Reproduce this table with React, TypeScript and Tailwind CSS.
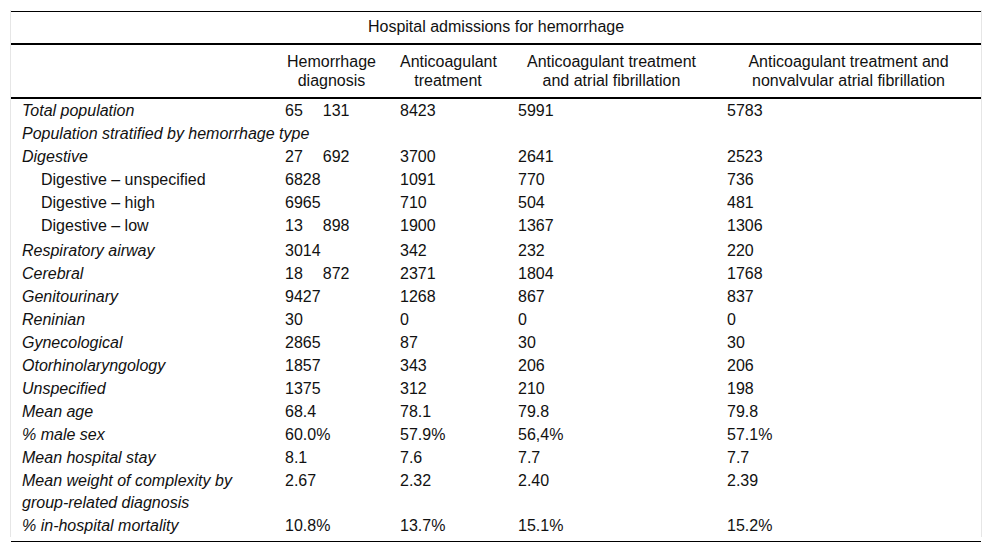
const columns = [
  { key: "c1", label: ["Hemorrhage", "diagnosis"] },
  { key: "c2", label: ["Anticoagulant", "treatment"] },
  { key: "c3", label: ["Anticoagulant treatment", "and atrial fibrillation"] },
  { key: "c4", label: ["Anticoagulant treatment and", "nonvalvular atrial fibrillation"] },
];

type Row = {
  label: string[];
  values?: string[];
  sub?: boolean;
  gapAfter?: boolean;
};

const rows: Row[] = [
  { label: ["Total population"], values: ["65 131", "8423", "5991", "5783"] },
  { label: ["Population stratified by hemorrhage type"] },
  { label: ["Digestive"], values: ["27 692", "3700", "2641", "2523"] },
  { label: ["Digestive – unspecified"], values: ["6828", "1091", "770", "736"], sub: true },
  { label: ["Digestive – high"], values: ["6965", "710", "504", "481"], sub: true },
  { label: ["Digestive – low"], values: ["13 898", "1900", "1367", "1306"], sub: true, gapAfter: true },
  { label: ["Respiratory airway"], values: ["3014", "342", "232", "220"] },
  { label: ["Cerebral"], values: ["18 872", "2371", "1804", "1768"] },
  { label: ["Genitourinary"], values: ["9427", "1268", "867", "837"] },
  { label: ["Reninian"], values: ["30", "0", "0", "0"] },
  { label: ["Gynecological"], values: ["2865", "87", "30", "30"] },
  { label: ["Otorhinolaryngology"], values: ["1857", "343", "206", "206"] },
  { label: ["Unspecified"], values: ["1375", "312", "210", "198"] },
  { label: ["Mean age"], values: ["68.4", "78.1", "79.8", "79.8"] },
  { label: ["% male sex"], values: ["60.0%", "57.9%", "56,4%", "57.1%"] },
  { label: ["Mean hospital stay"], values: ["8.1", "7.6", "7.7", "7.7"] },
  {
    label: ["Mean weight of complexity by", "group-related diagnosis"],
    values: ["2.67", "2.32", "2.40", "2.39"],
  },
  { label: ["% in-hospital mortality"], values: ["10.8%", "13.7%", "15.1%", "15.2%"] },
];

// numbers like "65 131" are printed with a wide thousands gap
function Num({ v }: { v: string }) {
  const parts = v.split(" ");
  if (parts.length === 1) return <>{v}</>;
  return (
    <>
      {parts[0]}
      <span className="inline-block w-[20px]" />
      {parts[1]}
    </>
  );
}

export default function App() {
  return (
    <div
      className="w-[992px] h-[553px] bg-white pt-[10px] text-[16px] text-[#111]"
      style={{ fontFamily: '"Liberation Sans", Arial, sans-serif' }}
    >
      <div className="ml-[10px] w-[972px] border-x border-[#e6e6e6] pt-px">
        <table className="w-[970px] table-fixed border-collapse">
          <colgroup>
            <col className="w-[263px]" />
            <col className="w-[115px]" />
            <col className="w-[118px]" />
            <col className="w-[209px]" />
            <col className="w-[265px]" />
          </colgroup>
          <thead>
            <tr className="border-t border-black">
              <th colSpan={5} className="h-[32px] p-0 text-center font-normal leading-[20px]">
                Hospital admissions for hemorrhage
              </th>
            </tr>
            <tr className="border-t-2 border-black">
              <th className="p-0" />
              {columns.map((c) => (
                <th
                  key={c.key}
                  className="px-[11px] pt-[7px] pb-[7px] text-center font-normal leading-[19px] align-top"
                >
                  {c.label.map((l) => (
                    <div key={l} className="whitespace-nowrap">
                      {l}
                    </div>
                  ))}
                </th>
              ))}
            </tr>
          </thead>
          <tbody>
            <tr className="border-t-2 border-black">
              <td colSpan={5} className="h-[2px] p-0" />
            </tr>
            {rows.map((r, i) => (
              <tr key={i}>
                <td
                  className={
                    "align-top py-[0.5px] leading-[22px] " +
                    (r.sub ? "pl-[30px] not-italic" : "pl-[11px] italic") +
                    (r.gapAfter ? " pb-[2px]" : "")
                  }
                  colSpan={r.values ? 1 : 5}
                >
                  {r.label.map((l) => (
                    <div key={l} className="whitespace-nowrap">
                      {l}
                    </div>
                  ))}
                </td>
                {r.values?.map((v, j) => (
                  <td key={j} className="align-top px-[11px] py-[0.5px] leading-[22px] whitespace-nowrap">
                    <Num v={v} />
                  </td>
                ))}
              </tr>
            ))}
          </tbody>
        </table>
      </div>
      <div className="ml-[11px] mt-[4px] h-px w-[970px] bg-black" />
    </div>
  );
}
